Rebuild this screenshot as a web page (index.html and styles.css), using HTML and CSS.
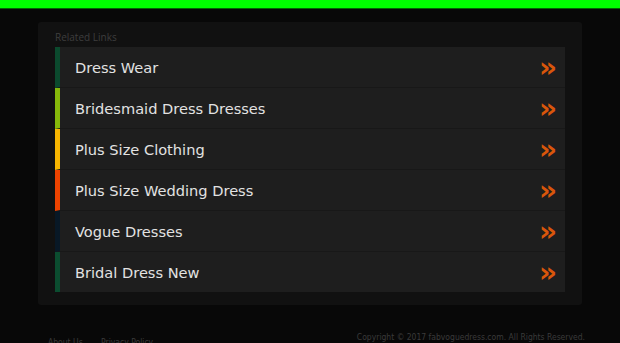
FILE: index.html
```html
<!DOCTYPE html>
<html lang="en">

<head>
    <meta charset="UTF-8">
    <meta name="viewport" content="width=device-width, initial-scale=1.0">
    <title>fabvoguedress.com</title>
    <link rel="stylesheet" href="styles.css">
</head>

<body>
    <div class="topbar"></div>
    <div class="wrap">
        <div class="panel">
            <div class="title">Related Links</div>
            <ul class="links">
                <li class="c1"><a href="#">Dress Wear</a><span class="arr">&raquo;</span></li>
                <li class="c2"><a href="#">Bridesmaid Dress Dresses</a><span class="arr">&raquo;</span></li>
                <li class="c3"><a href="#">Plus Size Clothing</a><span class="arr">&raquo;</span></li>
                <li class="c4"><a href="#">Plus Size Wedding Dress</a><span class="arr">&raquo;</span></li>
                <li class="c5"><a href="#">Vogue Dresses</a><span class="arr">&raquo;</span></li>
                <li class="c6"><a href="#">Bridal Dress New</a><span class="arr">&raquo;</span></li>
            </ul>
        </div>
        <div class="footer">
            <div class="fnav">
                <a href="#">About Us</a>
                <a href="#">Privacy Policy</a>
            </div>
            <div class="copy">Copyright &copy; 2017 fabvoguedress.com. All Rights Reserved.</div>
        </div>
    </div>
</body>

</html>
```

FILE: styles.css
```css
html,
body {
    margin: 0;
    padding: 0;
}

body {
    background-color: #080808;
    font-family: "DejaVu Sans", sans-serif;
    height: 343px;
    overflow: hidden;
}

.topbar {
    height: 8px;
    background-color: #00ff00;
    border-bottom: 1px solid #006600;
}

.wrap {
    width: 544px;
    margin: 13px auto 0;
}

.panel {
    background-color: #111111;
    border-radius: 3px;
    padding: 8px 17px 13px;
}

.title {
    font-family: "Open Sans", sans-serif;
    font-size: 10px;
    color: #3e3e3e;
    height: 17px;
    line-height: 14px;
}

.links {
    list-style: none;
    margin: 0;
    padding: 0;
}

.links li {
    display: flex;
    align-items: center;
    justify-content: space-between;
    box-sizing: border-box;
    height: 41px;
    background-color: #1e1e1e;
    border-left: 5px solid #0b4d30;
    border-bottom: 1px solid #181818;
    padding: 1px 8px 0 15px;
}

.links li:last-child {
    border-bottom: none;
    height: 40px;
}

.links a {
    color: #e2e2e2;
    text-decoration: none;
    font-size: 14.6px;
}

.arr {
    color: #d9560b;
    font-size: 28px;
    font-weight: bold;
    line-height: 20px;
}

.c1 { border-left-color: #0b4a2e !important; }
.c2 { border-left-color: #86b80a !important; }
.c3 { border-left-color: #f7b500 !important; }
.c4 { border-left-color: #ee4300 !important; }
.c5 { border-left-color: #081826 !important; }
.c6 { border-left-color: #0b4d30 !important; }

.footer {
    display: flex;
    justify-content: space-between;
    padding: 27px 0 0 10px;
    margin-right: -3px;
    font-family: "DejaVu Sans Condensed", "DejaVu Sans", sans-serif;
    font-stretch: condensed;
    font-size: 8.5px;
    color: #3a3a3a;
}

.fnav {
    padding-top: 5px;
}

.fnav a {
    color: #3a3a3a;
    text-decoration: none;
    margin-right: 16px;
}
```
